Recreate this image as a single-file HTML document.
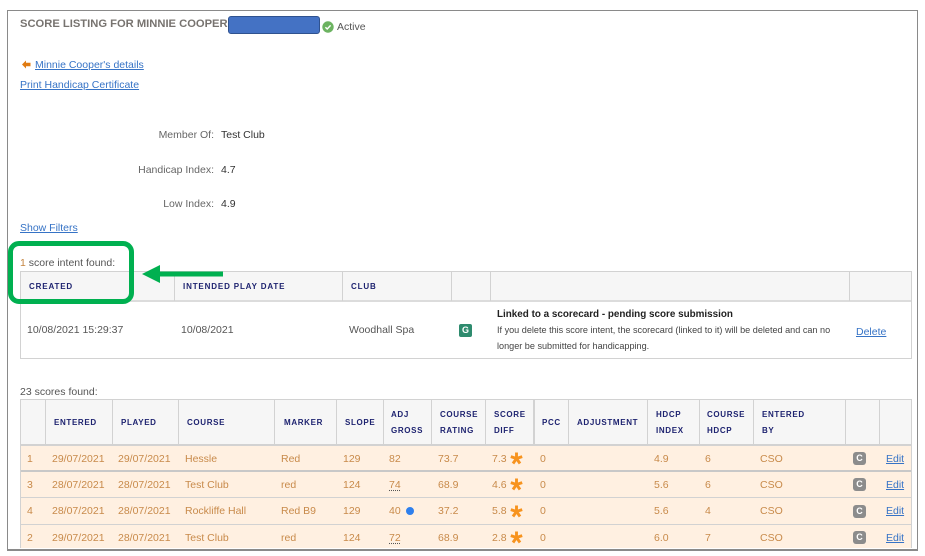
<!DOCTYPE html>
<html><head><meta charset="utf-8">
<style>
html,body{margin:0;padding:0;background:#fff;}
#p{position:relative;width:925px;height:556px;overflow:hidden;background:#fff;font-family:"Liberation Sans",sans-serif;font-size:10.5px;color:#555;}
.t{position:absolute;white-space:nowrap;line-height:14px;}
.b{position:absolute;}
.h{position:absolute;white-space:nowrap;line-height:14px;font-weight:bold;font-size:8px;letter-spacing:.65px;color:#1e2370;}
.w{letter-spacing:.85px;}
.a{color:#3673c6;text-decoration:underline;}
.o{color:#c88a4a;}
.dk{color:#333;}
.u{text-decoration:underline dotted #555;text-underline-offset:2px;}
.v{position:absolute;width:1px;background:#d2d2d2;}
.hl{position:absolute;height:1px;background:#d2d2d2;}
.c{position:absolute;left:853px;width:13px;height:13px;border-radius:3px;background:#8c8c8c;color:#fff;font-weight:bold;font-size:9px;line-height:13px;text-align:center;}
</style></head>
<body><div id="p">
<!-- frame -->
<div class="b" style="left:7px;top:10px;width:909px;height:538px;border:1px solid #8a8a8a;border-bottom-width:2px;"></div>

<!-- heading -->
<div class="t" style="left:20px;top:17px;font-weight:bold;font-size:11.2px;color:#77736f;">SCORE LISTING FOR MINNIE COOPER</div>
<div class="b" style="left:228px;top:16px;width:92px;height:18px;box-sizing:border-box;background:#4472c4;border:1px solid #2f528f;border-radius:3px;"></div>
<svg class="b" style="left:322px;top:21px" width="12" height="12" viewBox="0 0 12 12"><circle cx="6" cy="6" r="5.7" fill="#6cb361"/><path d="M3.4 6.2l1.8 1.8 3.4-3.6" fill="none" stroke="#fff" stroke-width="1.4"/></svg>
<div class="t" style="left:337px;top:20px;">Active</div>

<!-- links -->
<svg class="b" style="left:22px;top:60px" width="9" height="9" viewBox="0 0 9 9"><path d="M0 4.500L4 .5V2.800h4.500v3.400H4v2.300z" fill="#e07b12"/></svg>
<div class="t a" style="left:35px;top:58px;">Minnie Cooper's details</div>
<div class="t a" style="left:20px;top:78px;">Print Handicap Certificate</div>

<!-- info -->
<div class="t" style="right:711px;top:128px;color:#666;">Member Of:</div>
<div class="t dk" style="left:221px;top:128px;">Test Club</div>
<div class="t" style="right:711px;top:163px;color:#666;">Handicap Index:</div>
<div class="t dk" style="left:221px;top:163px;">4.7</div>
<div class="t" style="right:711px;top:197px;color:#666;">Low Index:</div>
<div class="t dk" style="left:221px;top:197px;">4.9</div>
<div class="t a" style="left:20px;top:221px;">Show Filters</div>

<!-- intent table -->
<div class="t" style="left:20px;top:256px;"><span style="color:#c4843f">1</span> score intent found:</div>
<div class="b" style="left:20px;top:271px;width:891px;height:29px;background:#f6f6f6;"></div>
<div class="hl" style="left:20px;top:271px;width:891px;"></div>
<div class="hl" style="left:20px;top:300px;width:891px;height:2px;background:#dcdcdc;"></div>
<div class="hl" style="left:20px;top:358px;width:891px;"></div>
<div class="v" style="left:20px;top:271px;height:88px;"></div>
<div class="v" style="left:911px;top:271px;height:88px;"></div>
<div class="v" style="left:174px;top:271px;height:30px;"></div>
<div class="v" style="left:342px;top:271px;height:30px;"></div>
<div class="v" style="left:451px;top:271px;height:30px;"></div>
<div class="v" style="left:490px;top:271px;height:30px;"></div>
<div class="v" style="left:849px;top:271px;height:30px;"></div>
<div class="h w" style="left:29px;top:280px;">CREATED</div>
<div class="h w" style="left:183px;top:280px;">INTENDED PLAY DATE</div>
<div class="h w" style="left:351px;top:280px;">CLUB</div>
<div class="t" style="left:27px;top:323px;">10/08/2021 15:29:37</div>
<div class="t" style="left:181px;top:323px;">10/08/2021</div>
<div class="t" style="left:349px;top:323px;">Woodhall Spa</div>
<div class="b" style="left:459px;top:324px;width:13px;height:13px;border-radius:2px;background:#2e8b6e;color:#fff;font-weight:bold;font-size:9px;line-height:13px;text-align:center;">G</div>
<div class="t" style="left:497px;top:308px;font-weight:bold;color:#222;font-size:9.9px;">Linked to a scorecard - pending score submission</div>
<div class="t" style="left:497px;top:323px;font-size:9.1px;color:#444;">If you delete this score intent, the scorecard (linked to it) will be deleted and can no</div>
<div class="t" style="left:497px;top:339px;font-size:9.1px;color:#444;">longer be submitted for handicapping.</div>
<div class="t a" style="left:856px;top:325px;">Delete</div>

<!-- scores -->
<div class="t" style="left:20px;top:385px;">23 scores found:</div>
<div class="b" style="left:20px;top:399px;width:891px;height:46px;background:#f6f6f6;"></div>
<div class="b" style="left:20px;top:445px;width:891px;height:103px;background:#fff0e1;"></div>
<div class="hl" style="left:20px;top:399px;width:891px;"></div>
<div class="hl" style="left:20px;top:444px;width:891px;height:2px;"></div>
<div class="hl" style="left:20px;top:470px;width:891px;background:#c8c8c8;height:2px;"></div>
<div class="hl" style="left:20px;top:497px;width:891px;"></div>
<div class="hl" style="left:20px;top:524px;width:891px;"></div>
<div class="v" style="left:20px;top:399px;height:149px;"></div>
<div class="v" style="left:911px;top:399px;height:149px;"></div>
<div class="v" style="left:45px;top:399px;height:46px;"></div>
<div class="v" style="left:112px;top:399px;height:46px;"></div>
<div class="v" style="left:178px;top:399px;height:46px;"></div>
<div class="v" style="left:274px;top:399px;height:46px;"></div>
<div class="v" style="left:336px;top:399px;height:46px;"></div>
<div class="v" style="left:383px;top:399px;height:46px;"></div>
<div class="v" style="left:431px;top:399px;height:46px;"></div>
<div class="v" style="left:485px;top:399px;height:46px;"></div>
<div class="v" style="left:533px;top:399px;height:46px;width:2px;"></div>
<div class="v" style="left:568px;top:399px;height:46px;"></div>
<div class="v" style="left:647px;top:399px;height:46px;"></div>
<div class="v" style="left:699px;top:399px;height:46px;"></div>
<div class="v" style="left:753px;top:399px;height:46px;"></div>
<div class="v" style="left:845px;top:399px;height:46px;"></div>
<div class="v" style="left:879px;top:399px;height:46px;"></div>

<div class="h" style="left:54px;top:416px;">ENTERED</div>
<div class="h" style="left:121px;top:416px;">PLAYED</div>
<div class="h" style="left:187px;top:416px;">COURSE</div>
<div class="h" style="left:284px;top:416px;">MARKER</div>
<div class="h" style="left:345px;top:416px;">SLOPE</div>
<div class="h" style="left:391px;top:408px;">ADJ</div>
<div class="h" style="left:391px;top:424px;">GROSS</div>
<div class="h" style="left:440px;top:408px;">COURSE</div>
<div class="h" style="left:440px;top:424px;">RATING</div>
<div class="h" style="left:494px;top:408px;">SCORE</div>
<div class="h" style="left:494px;top:424px;">DIFF</div>
<div class="h" style="left:542px;top:416px;">PCC</div>
<div class="h" style="left:577px;top:416px;">ADJUSTMENT</div>
<div class="h" style="left:656px;top:408px;">HDCP</div>
<div class="h" style="left:656px;top:424px;">INDEX</div>
<div class="h" style="left:707px;top:408px;">COURSE</div>
<div class="h" style="left:707px;top:424px;">HDCP</div>
<div class="h" style="left:762px;top:408px;">ENTERED</div>
<div class="h" style="left:762px;top:424px;">BY</div>

<!-- row 1 -->
<div class="t o" style="left:27px;top:452px;">1</div>
<div class="t o" style="left:52px;top:452px;">29/07/2021</div>
<div class="t o" style="left:118px;top:452px;">29/07/2021</div>
<div class="t o" style="left:185px;top:452px;">Hessle</div>
<div class="t o" style="left:281px;top:452px;">Red</div>
<div class="t o" style="left:343px;top:452px;">129</div>
<div class="t o" style="left:389px;top:452px;">82</div>
<div class="t o" style="left:438px;top:452px;">73.7</div>
<div class="t o" style="left:492px;top:452px;">7.3</div>
<div class="t o" style="left:540px;top:452px;">0</div>
<div class="t o" style="left:654px;top:452px;">4.9</div>
<div class="t o" style="left:705px;top:452px;">6</div>
<div class="t o" style="left:760px;top:452px;">CSO</div>
<div class="c" style="top:452px;">C</div>
<div class="t a" style="left:886px;top:452px;">Edit</div>
<!-- row 2 -->
<div class="t o" style="left:27px;top:478px;">3</div>
<div class="t o" style="left:52px;top:478px;">28/07/2021</div>
<div class="t o" style="left:118px;top:478px;">28/07/2021</div>
<div class="t o" style="left:185px;top:478px;">Test Club</div>
<div class="t o" style="left:281px;top:478px;">red</div>
<div class="t o" style="left:343px;top:478px;">124</div>
<div class="t o u" style="left:389px;top:478px;">74</div>
<div class="t o" style="left:438px;top:478px;">68.9</div>
<div class="t o" style="left:492px;top:478px;">4.6</div>
<div class="t o" style="left:540px;top:478px;">0</div>
<div class="t o" style="left:654px;top:478px;">5.6</div>
<div class="t o" style="left:705px;top:478px;">6</div>
<div class="t o" style="left:760px;top:478px;">CSO</div>
<div class="c" style="top:478px;">C</div>
<div class="t a" style="left:886px;top:478px;">Edit</div>
<!-- row 3 -->
<div class="t o" style="left:27px;top:504px;">4</div>
<div class="t o" style="left:52px;top:504px;">28/07/2021</div>
<div class="t o" style="left:118px;top:504px;">28/07/2021</div>
<div class="t o" style="left:185px;top:504px;">Rockliffe Hall</div>
<div class="t o" style="left:281px;top:504px;">Red B9</div>
<div class="t o" style="left:343px;top:504px;">129</div>
<div class="t o" style="left:389px;top:504px;">40</div>
<div class="b" style="left:406px;top:507px;width:8px;height:8px;border-radius:50%;background:#2f80ed;"></div>
<div class="t o" style="left:438px;top:504px;">37.2</div>
<div class="t o" style="left:492px;top:504px;">5.8</div>
<div class="t o" style="left:540px;top:504px;">0</div>
<div class="t o" style="left:654px;top:504px;">5.6</div>
<div class="t o" style="left:705px;top:504px;">4</div>
<div class="t o" style="left:760px;top:504px;">CSO</div>
<div class="c" style="top:505px;">C</div>
<div class="t a" style="left:886px;top:504px;">Edit</div>
<!-- row 4 -->
<div class="t o" style="left:27px;top:531px;">2</div>
<div class="t o" style="left:52px;top:531px;">29/07/2021</div>
<div class="t o" style="left:118px;top:531px;">28/07/2021</div>
<div class="t o" style="left:185px;top:531px;">Test Club</div>
<div class="t o" style="left:281px;top:531px;">red</div>
<div class="t o" style="left:343px;top:531px;">124</div>
<div class="t o u" style="left:389px;top:531px;">72</div>
<div class="t o" style="left:438px;top:531px;">68.9</div>
<div class="t o" style="left:492px;top:531px;">2.8</div>
<div class="t o" style="left:540px;top:531px;">0</div>
<div class="t o" style="left:654px;top:531px;">6.0</div>
<div class="t o" style="left:705px;top:531px;">7</div>
<div class="t o" style="left:760px;top:531px;">CSO</div>
<div class="c" style="top:531px;">C</div>
<div class="t a" style="left:886px;top:531px;">Edit</div>

<!-- stars -->
<svg class="b" style="left:510px;top:452px" width="13" height="13" viewBox="0 0 13 13"><path d="M6.500 .5v6M6.500 6.500L.8 4.600M6.500 6.500L12.200 4.600M6.500 6.500L3 11.500M6.500 6.500L10 11.500" stroke="#f7931e" stroke-width="2.900" fill="none"/></svg>
<svg class="b" style="left:510px;top:478px" width="13" height="13" viewBox="0 0 13 13"><path d="M6.500 .5v6M6.500 6.500L.8 4.600M6.500 6.500L12.200 4.600M6.500 6.500L3 11.500M6.500 6.500L10 11.500" stroke="#f7931e" stroke-width="2.900" fill="none"/></svg>
<svg class="b" style="left:510px;top:505px" width="13" height="13" viewBox="0 0 13 13"><path d="M6.500 .5v6M6.500 6.500L.8 4.600M6.500 6.500L12.200 4.600M6.500 6.500L3 11.500M6.500 6.500L10 11.500" stroke="#f7931e" stroke-width="2.900" fill="none"/></svg>
<svg class="b" style="left:510px;top:531px" width="13" height="13" viewBox="0 0 13 13"><path d="M6.500 .5v6M6.500 6.500L.8 4.600M6.500 6.500L12.200 4.600M6.500 6.500L3 11.500M6.500 6.500L10 11.500" stroke="#f7931e" stroke-width="2.900" fill="none"/></svg>

<!-- annotation -->
<div class="b" style="left:8px;top:241px;width:126px;height:63px;box-sizing:border-box;border:5px solid #00b050;border-radius:11px;"></div>
<svg class="b" style="left:140px;top:263px" width="84" height="22" viewBox="0 0 84 22"><path d="M2 11L20 2V8.500H83V13.500H20V20z" fill="#00b050"/></svg>
</div></body></html>
